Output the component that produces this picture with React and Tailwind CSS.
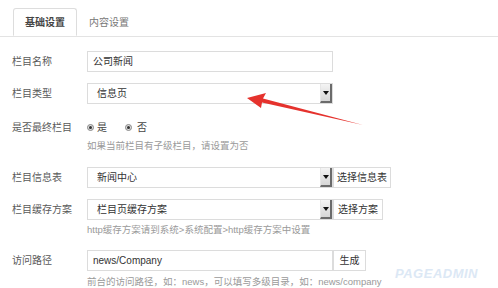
import React from 'react';

const font = { fontFamily: '"Liberation Sans", "Noto Sans CJK SC", sans-serif' };

const DropArrow = () => (
  <div className="flex h-full w-[12px] items-center justify-center border-l border-[#e6e6e6] border-r-2 border-b-2 border-r-[#6b6b6b] border-b-[#6b6b6b] bg-gradient-to-b from-[#f4f4f4] to-[#d6d6d6]">
    <svg width="6" height="4" viewBox="0 0 6 4">
      <path d="M0 0 L6 0 L3 4 Z" fill="#111" />
    </svg>
  </div>
);

const Label = ({ children }) => (
  <div className="w-[87px] shrink-0 pl-[12px] text-[10px] text-[#5a5a5a]">{children}</div>
);

const Field = ({ value, select }) => (
  <div className="flex h-[21px] w-[246px] items-center border border-[#dcdcdc] bg-white text-[10px] text-[#333]">
    <div className={select ? 'flex-1 pl-[9px]' : 'flex-1 pl-[5px]'}>{value}</div>
    {select && <DropArrow />}
  </div>
);

const Btn = ({ children, w }) => (
  <div className={`flex h-[21px] ${w} items-center justify-center border border-[#dcdcdc] bg-white text-[10px] text-[#333]`}>
    {children}
  </div>
);

const Hint = ({ children }) => (
  <div className="pl-[87px] text-[9.5px] leading-[12px] text-[#9a9a9a]">{children}</div>
);

const Radio = () => (
  <span className="inline-flex h-[7px] w-[7px] items-center justify-center rounded-full border border-[#888] bg-[#ddd]">
    <span className="h-[3px] w-[3px] rounded-full bg-[#333]" />
  </span>
);

export default function App() {
  return (
    <div className="relative h-[288px] w-[498px] overflow-hidden bg-white" style={font}>
      {/* tabs */}
      <div className="mt-[8px] flex border-b border-[#e3e3e3] pl-[13px]">
        <div className="-mb-px flex h-[28px] w-[64px] items-center justify-center rounded-t-[3px] border border-[#dddddd] border-b-white bg-white text-[10px] font-semibold text-[#444]">
          基础设置
        </div>
        <div className="flex h-[28px] w-[64px] items-center justify-center text-[10px] text-[#777]">
          内容设置
        </div>
      </div>

      <div className="mt-[14px] flex items-center">
        <Label>栏目名称</Label>
        <Field value="公司新闻" />
      </div>

      <div className="mt-[11px] flex items-center">
        <Label>栏目类型</Label>
        <Field value="信息页" select />
      </div>

      <div className="mt-[15px] flex h-[16px] items-center">
        <Label>是否最终栏目</Label>
        <div className="flex items-center text-[10px] text-[#444]">
          <Radio />
          <span className="ml-[3px]">是</span>
          <span className="ml-[18px] flex items-center"><Radio /></span>
          <span className="ml-[5px]">否</span>
        </div>
      </div>
      <div className="mt-[5px]">
        <Hint>如果当前栏目有子级栏目，请设置为否</Hint>
      </div>

      <div className="mt-[15px] flex items-center">
        <Label>栏目信息表</Label>
        <Field value="新闻中心" select />
        <Btn w="w-[58px]">选择信息表</Btn>
      </div>

      <div className="mt-[11px] flex items-center">
        <Label>栏目缓存方案</Label>
        <Field value="栏目页缓存方案" select />
        <Btn w="w-[50px]">选择方案</Btn>
      </div>
      <div className="mt-[4px]">
        <Hint>http缓存方案请到系统&gt;系统配置&gt;http缓存方案中设置</Hint>
      </div>

      <div className="mt-[14px] flex items-center">
        <Label>访问路径</Label>
        <Field value="news/Company" />
        <Btn w="w-[33px]">生成</Btn>
      </div>
      <div className="mt-[5px]">
        <Hint>前台的访问路径，如：news，可以填写多级目录，如：news/company</Hint>
      </div>

      {/* watermark */}
      <div className="absolute left-[395px] top-[264px] text-[13px] font-bold italic tracking-[0.5px] text-[#dce8f5]">
        PAGEADMIN
      </div>

      {/* red arrow */}
      <svg className="absolute left-0 top-0" width="498" height="288" viewBox="0 0 498 288">
        <path d="M247 98 L266 93 L263 98.5 L363 125 L262 102.5 L261 108 Z" fill="#e5322d" />
      </svg>
    </div>
  );
}
